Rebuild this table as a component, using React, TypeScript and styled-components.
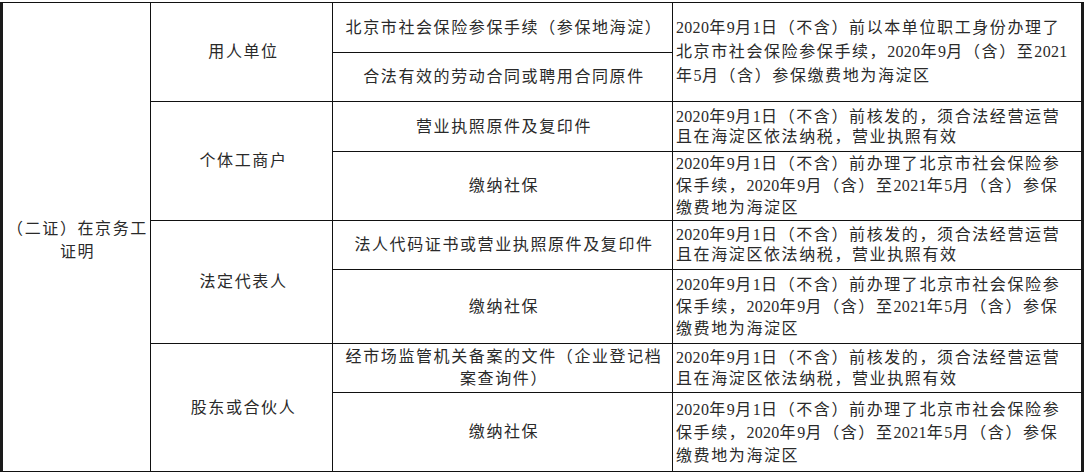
import React from "react";
import styled, { createGlobalStyle } from "styled-components";

const GlobalStyle = createGlobalStyle`
  html, body {
    margin: 0;
    padding: 0;
    background: #ffffff;
  }
  body {
    font-family: "Liberation Serif", "Noto Sans CJK SC", sans-serif;
    color: #2a2a2a;
  }
`;

interface Requirement {
  material: string[];
  note?: string[];
  height: number;
  noteSpan?: number;
  noteLine?: number;
}

interface Group {
  role: string;
  items: Requirement[];
}

const socialNote = [
  "2020年9月1日（不含）前办理了北京市社会保险参",
  "保手续，2020年9月（含）至2021年5月（含）参保",
  "缴费地为海淀区",
];

const licenseNote = [
  "2020年9月1日（不含）前核发的，须合法经营运营",
  "且在海淀区依法纳税，营业执照有效",
];

const groups: Group[] = [
  {
    role: "用人单位",
    items: [
      {
        material: ["北京市社会保险参保手续（参保地海淀）"],
        height: 50,
        noteSpan: 2,
        noteLine: 24,
        note: [
          "2020年9月1日（不含）前以本单位职工身份办理了",
          "北京市社会保险参保手续，2020年9月（含）至2021",
          "年5月（含）参保缴费地为海淀区",
        ],
      },
      { material: ["合法有效的劳动合同或聘用合同原件"], height: 49 },
    ],
  },
  {
    role: "个体工商户",
    items: [
      { material: ["营业执照原件及复印件"], height: 50, noteLine: 20, note: licenseNote },
      { material: ["缴纳社保"], height: 69, noteLine: 22, note: socialNote },
    ],
  },
  {
    role: "法定代表人",
    items: [
      {
        material: ["法人代码证书或营业执照原件及复印件"],
        height: 49,
        noteLine: 20,
        note: licenseNote,
      },
      { material: ["缴纳社保"], height: 74, noteLine: 22, note: socialNote },
    ],
  },
  {
    role: "股东或合伙人",
    items: [
      {
        material: ["经市场监管机关备案的文件（企业登记档", "案查询件）"],
        height: 49,
        noteLine: 21,
        note: licenseNote,
      },
      { material: ["缴纳社保"], height: 79, noteLine: 23, note: socialNote },
    ],
  },
];

const columns = [148, 182, 340, 411];

// digits are set tighter than the CJK text around them
const renderLine = (text: string) =>
  text
    .split(/(\d+)/)
    .filter(Boolean)
    .map((part, i) => (/^\d+$/.test(part) ? <Num key={i}>{part}</Num> : part));

const renderLines = (lines: string[]) =>
  lines.map((line, i) => (
    <React.Fragment key={i}>
      {i > 0 && <br />}
      {renderLine(line)}
    </React.Fragment>
  ));

const App: React.FC = () => {
  const totalRows = groups.reduce((n, g) => n + g.items.length, 0);

  return (
    <>
      <GlobalStyle />
      <Sheet>
        <colgroup>
          {columns.map((w, i) => (
            <Column key={i} $width={w} />
          ))}
        </colgroup>
        <tbody>
          {groups.map((group, gi) =>
            group.items.map((item, ii) => (
              <Row key={`${gi}-${ii}`} $height={item.height}>
                {gi === 0 && ii === 0 && (
                  <TitleCell rowSpan={totalRows}>
                    {renderLines(["（二证）在京务工", "证明"])}
                  </TitleCell>
                )}
                {ii === 0 && (
                  <RoleCell rowSpan={group.items.length}>{group.role}</RoleCell>
                )}
                <MaterialCell>{renderLines(item.material)}</MaterialCell>
                {item.note && (
                  <NoteCell rowSpan={item.noteSpan ?? 1} $line={item.noteLine ?? 22}>
                    {renderLines(item.note)}
                  </NoteCell>
                )}
              </Row>
            ))
          )}
        </tbody>
      </Sheet>
    </>
  );
};

// Styled Components
const Sheet = styled.table`
  margin-top: 2px;
  width: 1084px;
  table-layout: fixed;
  border-collapse: separate;
  border-spacing: 0;
  border-top: 1px solid #111111;
  border-left: 3px solid #1a1a1a;
  box-sizing: border-box;
  font-size: 16px;
  letter-spacing: 1.6px;
`;

const Column = styled.col<{ $width: number }>`
  width: ${(props) => props.$width}px;
`;

const Row = styled.tr<{ $height: number }>`
  height: ${(props) => props.$height}px;
`;

const Num = styled.span`
  letter-spacing: 0.3px;
`;

const Cell = styled.td`
  box-sizing: border-box;
  padding: 0;
  border-right: 1px solid #111111;
  border-bottom: 1px solid #111111;
  vertical-align: middle;
  white-space: nowrap;
  overflow: hidden;
`;

const TitleCell = styled(Cell)`
  text-align: center;
  line-height: 23px;
  padding-top: 6px;
  padding-left: 2px;
`;

const RoleCell = styled(Cell)`
  text-align: center;
  line-height: 22px;
  padding-left: 4px;
`;

const MaterialCell = styled(Cell)`
  text-align: center;
  line-height: 22px;
  padding-left: 3px;
`;

const NoteCell = styled(Cell)<{ $line: number }>`
  text-align: left;
  padding-left: 3px;
  line-height: ${(props) => props.$line}px;
  border-right: 3px solid #1a1a1a;
`;

export default App;
